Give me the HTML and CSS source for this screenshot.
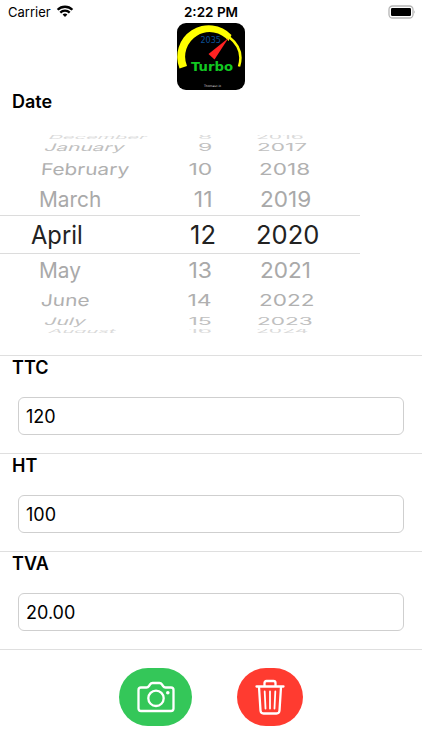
FILE: index.html
```html
<!DOCTYPE html>
<html lang="en">
<head>
    <meta charset="utf-8">
    <title>Turbo</title>
    <link rel="stylesheet" href="styles.css">
</head>
<body>

    <!-- Status bar -->
    <header class="status">
        <div class="carrier">
            <span>Carrier</span>
            <svg width="18" height="13" viewBox="0 0 18 13">
                <path d="M1.6 4.8a10.5 10.5 0 0 1 14.8 0M4.3 7.6a6.6 6.6 0 0 1 9.4 0" fill="none" stroke="#000" stroke-width="2.3"/>
                <path d="M6.6 9.6a3.4 3.4 0 0 1 4.8 0L9 12z"/>
            </svg>
        </div>
        <div class="time">2:22 PM</div>
        <div class="battery">
            <svg width="28" height="14" viewBox="0 0 28 14">
                <rect x="1" y="1" width="24" height="12" rx="3.5" fill="#fff" stroke="#b5b5b5" stroke-width="1.3"/>
                <rect x="3" y="3" width="20" height="8" rx="1.2"/>
                <path d="M26.3 5.2q1.5 1.8 0 3.6z" fill="#aaa"/>
            </svg>
        </div>
    </header>

    <div class="logo">
        <svg width="68" height="67" viewBox="0 0 68 67">
            <rect width="68" height="67" rx="9"/>
            <path d="M2.5 45.5A31.500 31.500 0 0 1 54.500 12L51.500 18A24.500 24.500 0 0 0 10 43z" fill="#ff0"/>
            <path d="M52 14Q67.500 26 62 43.500" fill="none" stroke="#ff0" stroke-width="2.5"/>
            <text x="23.5" y="20" class="logo-num">2035</text>
            <path d="M51.500 15L37.500 36.500L31.500 31z" fill="#f22"/>
            <text x="14" y="47.500" class="logo-name" textLength="42" lengthAdjust="spacingAndGlyphs">Turbo</text>
            <text x="27" y="64" class="logo-sub">Thomasc.io</text>
        </svg>
    </div>

    <main>
        <section class="date">
            <h2>Date</h2>
            <div class="wheel">
                <div class="row far"><span>December</span><span>8</span><span>2016</span></div>
                <div class="row third"><span>January</span><span>9</span><span>2017</span></div>
                <div class="row second"><span>February</span><span>10</span><span>2018</span></div>
                <div class="row first"><span>March</span><span>11</span><span>2019</span></div>
                <div class="row selected"><span>April</span><span>12</span><span>2020</span></div>
                <div class="row first"><span>May</span><span>13</span><span>2021</span></div>
                <div class="row second"><span>June</span><span>14</span><span>2022</span></div>
                <div class="row third"><span>July</span><span>15</span><span>2023</span></div>
                <div class="row far"><span>August</span><span>16</span><span>2024</span></div>
            </div>
        </section>

        <section class="field">
            <h2>TTC</h2>
            <input type="text" value="120">
        </section>
        <section class="field">
            <h2>HT</h2>
            <input type="text" value="100">
        </section>
        <section class="field">
            <h2>TVA</h2>
            <input type="text" value="20.00">
        </section>
    </main>

    <footer class="actions">
        <button class="photo">
            <svg width="38" height="32" viewBox="0 0 38 32">
                <path d="M4 6.5H9.500Q11 6.500 12 5L13 3.500Q14 2 15.500 2H22.500Q24 2 25 3.500L26 5Q27 6.500 28.500 6.500H34Q36.500 6.500 36.500 9V27.500Q36.500 30 34 30H4Q1.500 30 1.500 27.500V9Q1.500 6.500 4 6.500z"/>
                <circle cx="19" cy="17.300" r="7.700"/>
                <circle cx="30.800" cy="11.700" r="1.800" class="dot"/>
            </svg>
        </button>
        <button class="trash">
            <svg width="30" height="36" viewBox="0 0 30 36">
                <path d="M1.500 7.500H28.500M9.500 7V4Q9.500 2 11.500 2H18.500Q20.500 2 20.500 4V7M4 8L5.500 31.500Q5.700 34.500 8.500 34.500H21.500Q24.300 34.500 24.500 31.500L26 8"/>
                <path d="M9.700 12.500L10.500 29.500M15 12.500V29.500M20.300 12.500L19.500 29.500" class="thin"/>
            </svg>
        </button>
    </footer>

</body>
</html>
```
FILE: styles.css
```css
* {
    box-sizing: border-box;
}

body {
    margin: 0;
    font-family: Inter, "Liberation Sans", sans-serif;
    background-color: #fff;
    color: #000;
}

h2 {
    margin: 0;
    padding-left: 12px;
    font-size: 18px;
    font-weight: 600;
    line-height: 24px;
}

svg {
    display: block;
}

/* Status bar */
.status {
    display: grid;
    grid-template-columns: 1fr auto 1fr;
    align-items: center;
    height: 23px;
    padding: 0 6px 0 8px;
    font-size: 13px;
}

.carrier {
    display: flex;
    align-items: center;
    gap: 5px;
}

.time {
    margin-right: 2px;
    font-weight: 600;
    font-size: 13.5px;
}

.battery {
    justify-self: end;
}

/* Logo */
.logo {
    display: flex;
    justify-content: center;
    height: 67px;
}

.logo-num {
    font: 8px "DejaVu Sans", sans-serif;
    fill: #0b4f96;
}

.logo-name {
    font: bold 13px "DejaVu Sans", sans-serif;
    fill: #12c822;
}

.logo-sub {
    font: 3px "DejaVu Sans", sans-serif;
    fill: #ddd;
}

/* Date wheel */
.date {
    height: 265px;
}

.wheel {
    width: 360px;
    margin-top: 21px;
}

/* rows get flatter towards the edges of the wheel */
.row {
    --sy: 1;
    --skew: 0deg;
    --month: 39px;
    --year: 48px;
    display: grid;
    grid-template-columns: 172px 40px 1fr;
    grid-template-rows: 100%;
    align-items: center;
    font-size: 21.5px;
    line-height: 26px;
    color: #a9a9a9;
    white-space: nowrap;
}

.row span {
    justify-self: start;
    margin-left: var(--month);
    transform-origin: left center;
    transform: scale(0.97, var(--sy)) skewX(var(--skew));
}

.row span:nth-child(2) {
    justify-self: end;
    margin-left: 0;
    transform-origin: right center;
    transform: scale(1.07, var(--sy));
}

.row span:last-child {
    margin-left: var(--year);
    transform: scale(1.05, var(--sy));
}

.selected {
    --month: 31px;
    --year: 40px;
    height: 39px;
    grid-template-columns: 172px 44px 1fr;
    border-top: 1px solid #dcdcdc;
    border-bottom: 1px solid #dcdcdc;
    font-size: 25.5px;
    color: #222;
}

.selected span:first-child {
    transform: scaleX(0.93);
}

.selected span:nth-child(2),
.selected span:last-child {
    transform: none;
}

.first {
    height: 33px;
}

.selected + .first {
    height: 32px;
}

.second {
    --sy: 0.75;
    --skew: -4deg;
    --month: 41px;
    --year: 47px;
    height: 27px;
    color: #b0b0b0;
}

.third {
    --sy: 0.48;
    --skew: -12deg;
    --month: 45px;
    --year: 45px;
    height: 16px;
    color: #c0c0c0;
}

.far {
    --sy: 0.26;
    --skew: -12deg;
    --month: 49px;
    --year: 44px;
    height: 4px;
    color: #dadada;
    overflow: hidden;
}

.far span:first-child {
    transform: scale(0.93, var(--sy)) skewX(var(--skew));
}

.far span:last-child {
    transform: scale(0.98, var(--sy));
}

/* Form fields */
.field {
    height: 98px;
    border-top: 1px solid #dfdfdf;
}

.field input {
    display: block;
    width: 386px;
    height: 38px;
    margin: 17px 0 0 18px;
    padding: 0 7px;
    border: 1px solid #cfcfcf;
    border-radius: 6px;
    background: #fff;
    font: 18px Inter, "Liberation Sans", sans-serif;
    color: #000;
}

/* Action buttons */
.actions {
    display: flex;
    justify-content: center;
    gap: 45px;
    padding-top: 18px;
    border-top: 1px solid #dfdfdf;
}

.actions button {
    display: flex;
    align-items: center;
    justify-content: center;
    height: 58px;
    padding: 0;
    border: 0;
    border-radius: 29px;
}

.actions svg {
    fill: none;
    stroke: #fff;
    stroke-width: 2.3;
    stroke-linecap: round;
}

.actions .dot {
    fill: #fff;
    stroke: none;
}

.actions .thin {
    stroke-width: 1.8;
}

.photo {
    width: 73px;
    background-color: #34c759;
}

.trash {
    width: 66px;
    background-color: #ff3b30;
}
```
